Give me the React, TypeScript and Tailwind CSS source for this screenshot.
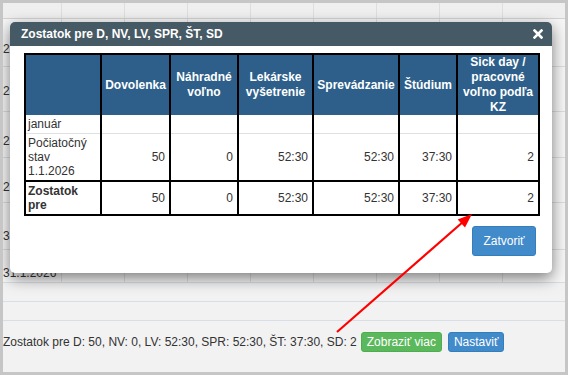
import React from 'react'

// ── Background sheet (mostly hidden behind the dialog) ───────────────────────

type SheetRow = {
  label: string
  rowClass: string  // height + text offset of the row (row border adds 1px)
}

const SHEET_ROWS: SheetRow[] = [
  { label: '2', rowClass: 'h-[47px] pt-[23px]' },
  { label: '2', rowClass: 'h-[44px] pt-[17px]' },
  { label: '2', rowClass: 'h-[45px] pt-[22px]' },
  { label: '2', rowClass: 'h-[44px] pt-[22px]' },
  { label: '3', rowClass: 'h-[46px] pt-[26px]' },
  { label: '31.1.2026', rowClass: 'h-[32px] pt-[16px]' },
]

const COLS = [0, 1, 2, 3, 4, 5, 6, 7]

function Sheet() {
  return (
    <div className="flex flex-col">
      {/* header strip */}
      <div className="flex h-[16px] bg-[#efefef] border-b border-[#d2d2d2]">
        <div className="w-[59px] flex-none border-r border-[#dedede]" />
        {COLS.map((c) => (
          <div key={c} className="w-[63px] flex-none border-r border-[#dedede]" />
        ))}
      </div>

      {SHEET_ROWS.map((row, i) => (
        <div key={i} className="flex bg-[#f6f6f6] border-b border-[#d6dfe6]">
          <div className={`w-[59px] flex-none border-r border-[#dedede] leading-[15px] whitespace-nowrap ${row.rowClass}`}>
            {row.label}
          </div>
          {COLS.map((c) => (
            <div key={c} className="w-[63px] flex-none border-r border-[#dedede]" />
          ))}
        </div>
      ))}

      <div className="h-[19px] border-b border-[#d6dfe6]" />
      <div className="h-[19px] border-b border-[#d6dfe6]" />

      {/* summary line */}
      <div className="flex items-center pt-[11px] leading-[15px]">
        <span>Zostatok pre D: 50, NV: 0, LV: 52:30, SPR: 52:30, ŠT: 37:30, SD: 2</span>
        <button className="ml-[4px] h-[20px] px-[5px] rounded-[3px] bg-[#5cb85c] border border-[#4cae4c] text-white">
          Zobraziť viac
        </button>
        <button className="ml-[6px] h-[20px] px-[5px] rounded-[3px] bg-[#428bca] border border-[#357ebd] text-white">
          Nastaviť
        </button>
      </div>
    </div>
  )
}

// ── Balance dialog ────────────────────────────────────────────────────────────

const HEADERS = [
  '',
  'Dovolenka',
  'Náhradné voľno',
  'Lekárske vyšetrenie',
  'Sprevádzanie',
  'Štúdium',
  'Sick day / pracovné voľno podľa KZ',
]

const COL_WIDTHS = ['w-[76px]', 'w-[69px]', 'w-[68px]', 'w-[75px]', 'w-[86px]', 'w-[58px]', 'w-[82px]']

const VALUES = ['50', '0', '52:30', '52:30', '37:30', '2']

function BalanceDialog() {
  return (
    <div className="absolute left-[7px] top-[19px] w-[542px] h-[251px] bg-white rounded-[5px] shadow-[0_5px_15px_rgba(0,0,0,0.5)]">
      <div className="flex items-center justify-between h-[24px] pl-[11px] pr-[9px] bg-[#465a65] rounded-t-[5px] text-white font-bold">
        <span>Zostatok pre D, NV, LV, SPR, ŠT, SD</span>
        <svg width="10" height="10" viewBox="0 0 10 10" aria-hidden>
          <path d="M1.5 1.5 L8.5 8.5 M8.5 1.5 L1.5 8.5" stroke="white" strokeWidth="2.6" strokeLinecap="square" />
        </svg>
      </div>

      <div className="pt-[7px] pl-[14px] pr-[13px]">
        <table className="table-fixed border-collapse border-2 border-black w-[515px]">
          <colgroup>
            {COL_WIDTHS.map((w, i) => (
              <col key={i} className={w} />
            ))}
          </colgroup>
          <thead>
            <tr>
              {HEADERS.map((h, i) => (
                <th
                  key={i}
                  className="h-[60px] px-[3px] py-0 bg-[#2d5f8a] text-white font-bold text-center align-middle leading-[15px] border-x-2 border-black"
                >
                  {h}
                </th>
              ))}
            </tr>
          </thead>
          <tbody className="leading-[14px]">
            <tr>
              <td className="pl-[2px] py-[2px] border-x-2 border-b border-x-black border-b-[#dde2e6]">január</td>
              {VALUES.map((_, i) => (
                <td key={i} className="border-x-2 border-b border-x-black border-b-[#dde2e6]" />
              ))}
            </tr>
            <tr>
              <td className="pl-[2px] pr-[4px] py-[2px] border-x-2 border-b-2 border-black">
                Počiatočný stav 1.1.2026
              </td>
              {VALUES.map((v, i) => (
                <td key={i} className="pr-[4px] py-[2px] text-right align-middle border-x-2 border-b-2 border-black">
                  {v}
                </td>
              ))}
            </tr>
            <tr>
              <td className="pl-[2px] pr-[4px] py-[2px] font-bold border-x-2 border-black">Zostatok pre</td>
              {VALUES.map((v, i) => (
                <td key={i} className="pr-[4px] py-[2px] text-right align-middle border-x-2 border-black">
                  {v}
                </td>
              ))}
            </tr>
          </tbody>
        </table>

        <div className="flex justify-end mt-[10px] pr-[3px]">
          <button className="w-[64px] h-[30px] rounded-[3px] bg-[#428bca] border border-[#357ebd] text-white">
            Zatvoriť
          </button>
        </div>
      </div>
    </div>
  )
}

// ── Annotation arrow ──────────────────────────────────────────────────────────

function RedArrow() {
  return (
    <svg className="absolute left-0 top-0 pointer-events-none" width="562" height="369" aria-hidden>
      <line x1="334" y1="329" x2="461" y2="218" stroke="#ff0000" strokeWidth="2.2" />
      <polygon points="469,211 454.7,216.6 462,224.4" fill="#ff0000" />
    </svg>
  )
}

export default function App() {
  return (
    <div className="relative w-[568px] h-[375px] overflow-hidden border-[3px] border-[#c6c6c6] bg-[#f2f2f2] font-['Liberation_Sans',Arial,sans-serif] text-[12px] text-[#333]">
      <Sheet />
      <BalanceDialog />
      <RedArrow />
    </div>
  )
}
